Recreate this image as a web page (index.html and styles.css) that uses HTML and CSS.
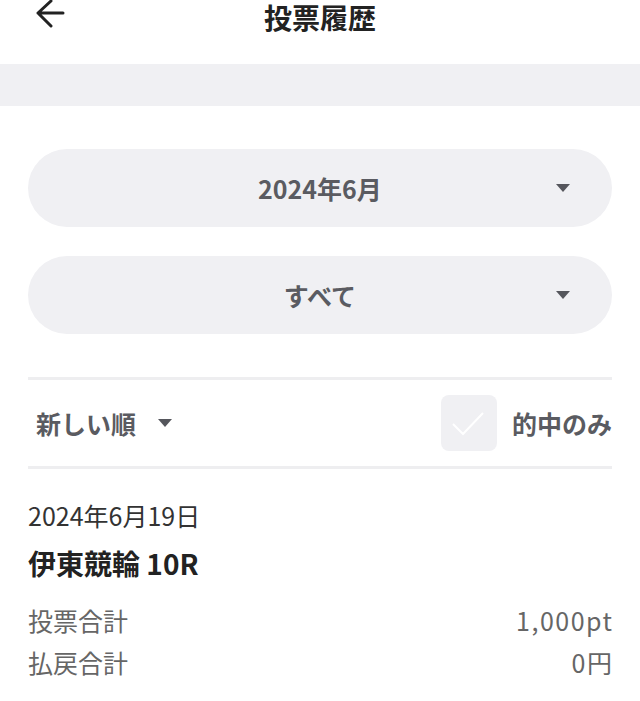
FILE: index.html
```html
<!DOCTYPE html>
<html lang="ja">
<head>
<meta charset="utf-8">
<title>投票履歴</title>
<link rel="stylesheet" href="styles.css">
</head>
<body>
<header class="header">
  <button class="back" aria-label="戻る">
    <svg width="30" height="28" viewBox="0 0 30 28"><path d="M28 13H3M16 1L3 13L16 26" fill="none" stroke="#222" stroke-width="3" stroke-linecap="round" stroke-linejoin="round"/></svg>
  </button>
  <h1 class="title">投票履歴</h1>
</header>
<div class="band"></div>
<main class="content">
  <div class="selects">
    <div class="select"><span class="select-label">2024年6月</span><span class="tri"></span></div>
    <div class="select"><span class="select-label">すべて</span><span class="tri"></span></div>
  </div>
  <div class="filter">
    <div class="sort">新しい順<span class="tri small"></span></div>
    <div class="hit">
      <span class="check"><svg width="56" height="56" viewBox="0 0 56 56"><path d="M12 29L22 39L42 18" fill="none" stroke="#fff" stroke-width="2"/></svg></span>
      <span class="hit-label">的中のみ</span>
    </div>
  </div>
  <section class="item">
    <div class="date">2024年6月19日</div>
    <div class="race">伊東競輪 10R</div>
    <div class="row"><span>投票合計</span><span class="value">1,000pt</span></div>
    <div class="row"><span>払戻合計</span><span class="value">0円</span></div>
  </section>
</main>
</body>
</html>
```
FILE: styles.css
```css
* { box-sizing: border-box; }
html, body { margin: 0; padding: 0; background: #fff; }
body {
  font-family: "Noto Sans CJK JP", "Noto Sans", sans-serif;
  color: #222;
  width: 640px;
  height: 701px;
  overflow: hidden;
}
.header {
  height: 64px;
  display: flex;
  align-items: flex-start;
  justify-content: center;
  position: relative;
}
.back {
  position: absolute;
  left: 35px;
  top: 0;
  border: 0;
  background: none;
  padding: 0;
  width: 30px;
  height: 28px;
}
.back svg { display: block; }
.title {
  margin: 1px 0 0;
  font-size: 28px;
  font-weight: 700;
  line-height: 32px;
  color: #222;
}
.band { height: 42px; background: #f0f0f3; }
.content { padding: 43px 28px 0; }
.selects { display: flex; flex-direction: column; gap: 29px; }
.select {
  height: 78px;
  border-radius: 39px;
  background: #f0f0f3;
  display: flex;
  align-items: center;
  justify-content: center;
  position: relative;
}
.select-label {
  font-size: 25px;
  font-weight: 700;
  color: #5a5b61;
}
.tri {
  width: 0; height: 0;
  border-left: 7px solid transparent;
  border-right: 7px solid transparent;
  border-top: 8px solid #55565c;
}
.select .tri { position: absolute; right: 42px; top: 35px; }
.filter {
  margin-top: 43px;
  border-top: 3px solid #eeeef0;
  border-bottom: 3px solid #eeeef0;
  height: 92px;
  display: flex;
  align-items: center;
  justify-content: space-between;
}
.sort {
  padding-left: 8px;
  font-size: 25px;
  font-weight: 700;
  color: #5a5b61;
  display: flex;
  align-items: center;
  gap: 22px;
}
.hit { display: flex; align-items: center; gap: 15px; }
.check {
  width: 56px; height: 56px;
  border-radius: 8px;
  background: #f0f0f3;
  display: block;
}
.check svg { display: block; }
.hit-label { font-size: 25px; font-weight: 700; color: #5a5b61; }
.item { padding-top: 30px; }
.date { font-size: 25px; color: #333; line-height: 32px; }
.race { font-size: 28px; font-weight: 700; color: #222; margin-top: 15px; line-height: 34px; }
.row {
  display: flex;
  justify-content: space-between;
  font-size: 25px;
  color: #666;
  line-height: 34px;
}
.value { letter-spacing: 1.5px; margin-right: -1.5px; }
.race + .row { margin-top: 23px; }
.row + .row { margin-top: 8px; }
```
